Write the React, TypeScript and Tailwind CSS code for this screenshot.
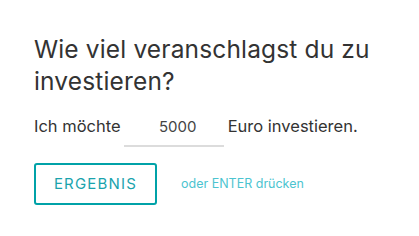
import React from "react";

export default function App() {
  return (
    <div className="w-[419px] h-[236px] bg-white pl-[34px] pt-[33px]" style={{ fontFamily: "Inter, 'Noto Sans', sans-serif" }}>
      <h1 className="text-[24.5px] leading-[32px] tracking-[0.15px] text-[#333333] font-normal w-[380px]">
        Wie viel veranschlagst du zu investieren?
      </h1>
      <div className="flex items-end mt-[18px] text-[16.5px] text-[#333333] h-[32px]">
        <span className="pb-[8px]">Ich möchte</span>
        <div className="ml-[3px] w-[100px] border-b-2 border-[#dcdcdc] text-center text-[15px] text-[#444] pb-[7px] pl-[8px]">5000</div>
        <span className="ml-[4px] pb-[8px]">Euro investieren.</span>
      </div>
      <div className="flex items-center mt-[16px]">
        <button className="w-[123px] h-[42px] border-2 border-[#00a2a8] rounded-[3px] text-[#1aa3ad] text-[15px] tracking-[1.2px]">
          ERGEBNIS
        </button>
        <span className="ml-[24px] text-[12.5px] text-[#4cc4d0]">oder ENTER drücken</span>
      </div>
    </div>
  );
}
